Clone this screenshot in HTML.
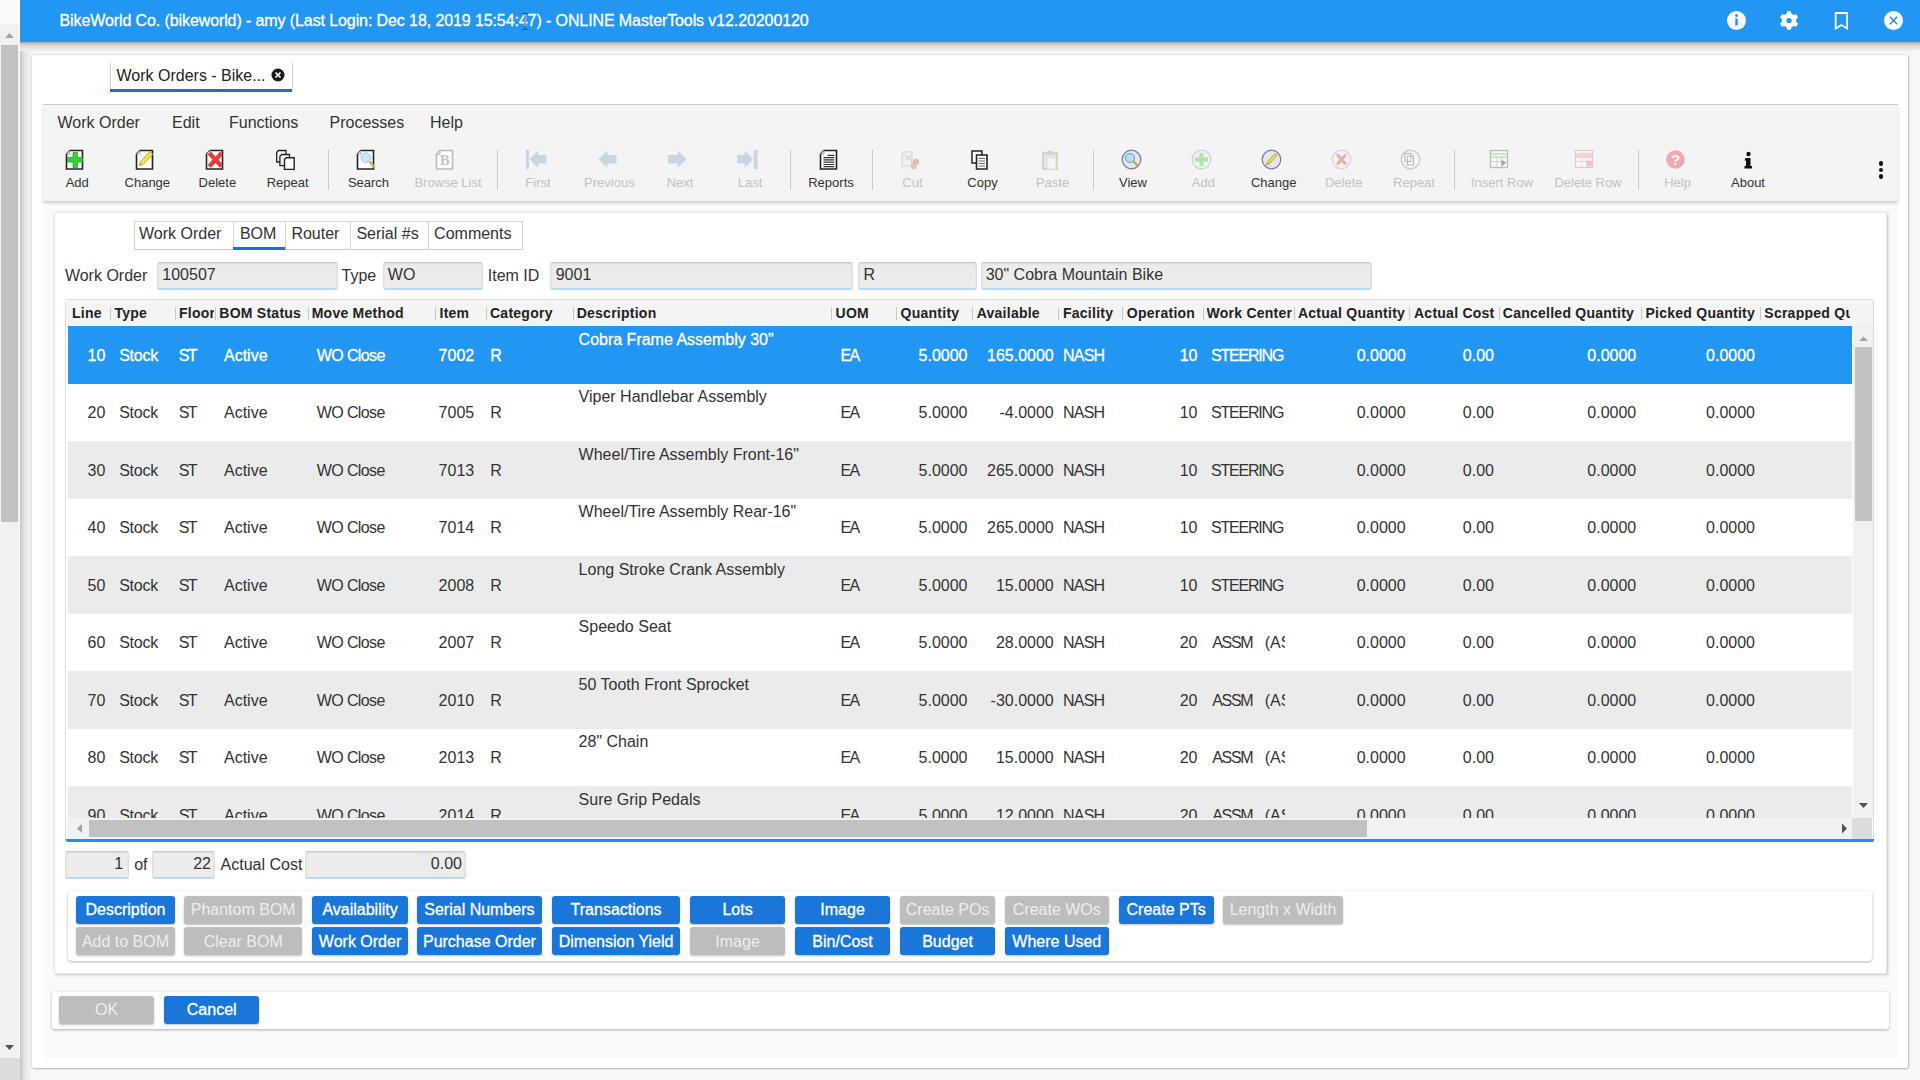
<!DOCTYPE html>
<html><head><meta charset="utf-8"><title>Work Orders</title>
<style>
html,body{margin:0;padding:0;width:1920px;height:1080px;overflow:hidden;background:#f4f4f4;font-family:"Liberation Sans", sans-serif;}
body *{font-family:"Liberation Sans", sans-serif;}
</style></head><body>
<div style="position:absolute;left:0px;top:0px;width:20px;height:1080px;background:#f1f1f1;"></div><div style="position:absolute;left:1px;top:45px;width:17px;height:477px;background:#c1c1c1;"></div><div style="position:absolute;left:0px;top:0px;width:20px;height:24px;background:#f9f9f9;"></div><div style="position:absolute;left:19px;top:0px;width:1px;height:1080px;background:#fbfbfb;"></div><svg style="position:absolute;left:0;top:0" width="20" height="1080"><path d="M5 38 L9.5 33 L14 38 Z" fill="#a3a3a3"/><path d="M5 1045 L14 1045 L9.5 1050 Z" fill="#505050"/></svg><div style="position:absolute;left:0px;top:1058px;width:20px;height:22px;background:#dcdcdc;"></div><div style="position:absolute;left:20px;top:0px;width:1900px;height:1080px;background:#f7f7f7;"></div><div style="position:absolute;left:20px;top:42px;width:12px;height:1038px;background:linear-gradient(to right,#c4c4c4,#e6e6e6 40%,#f6f6f6 100%);"></div><div style="position:absolute;left:20px;top:42px;width:1900px;height:9px;background:linear-gradient(to bottom,#a8a8a8,#d8d8d8 35%,#f2f2f2 100%);"></div><div style="position:absolute;left:20px;top:0px;width:1900px;height:42px;background:#2196f3;z-index:2;"></div><div style="position:absolute;top:12.62px;font-size:16px;line-height:1;color:#fff;font-weight:400;white-space:nowrap;z-index:3;letter-spacing:-0.1px;-webkit-text-stroke:0.3px #fff;left:59.5px;">BikeWorld Co. (bikeworld) - amy (Last Login: Dec 18, 2019 15:54:47) - ONLINE MasterTools v12.20200120</div><svg style="position:absolute;left:520px;top:12px;z-index:4" width="10" height="20"><path d="M2 1.5 h2 M6 1.5 h2 M5 2 v15 M2 17.5 h2 M6 17.5 h2" stroke="#4a4a4a" stroke-width="1" fill="none"/><path d="M4 1.5 h2 M4 17.5 h2" stroke="#4a4a4a" stroke-width="0.9"/></svg><svg style="position:absolute;left:1700px;top:0;z-index:3" width="220" height="42">
<circle cx="36.5" cy="20.5" r="9.5" fill="#fff"/><rect x="35.3" y="18.5" width="2.4" height="7" fill="#2196f3"/><circle cx="36.5" cy="15.5" r="1.4" fill="#2196f3"/>
<g transform="translate(89,20.5)" fill="#fff"><path d="M-1.8 -9.3 h3.6 l0.6 2.6 a7 7 0 0 1 2.2 1.3 l2.6 -0.8 l1.8 3.1 l-2 1.8 a7 7 0 0 1 0 2.6 l2 1.8 l-1.8 3.1 l-2.6 -0.8 a7 7 0 0 1 -2.2 1.3 l-0.6 2.6 h-3.6 l-0.6 -2.6 a7 7 0 0 1 -2.2 -1.3 l-2.6 0.8 l-1.8 -3.1 l2 -1.8 a7 7 0 0 1 0 -2.6 l-2 -1.8 l1.8 -3.1 l2.6 0.8 a7 7 0 0 1 2.2 -1.3 z"/><circle r="2.6" fill="#2196f3"/></g>
<path d="M135.7 13 h11.4 v15.5 l-5.7 -3.5 l-5.7 3.5 z" fill="none" stroke="#fff" stroke-width="1.8"/>
<circle cx="193.5" cy="20.5" r="9.5" fill="#fff"/><path d="M189.8 16.8 l7.4 7.4 M197.2 16.8 l-7.4 7.4" stroke="#2196f3" stroke-width="1.6"/>
</svg><div style="position:absolute;left:32px;top:55px;width:1876px;height:1013px;background:#fff;border-radius:2px;box-shadow:0 0 2px rgba(0,0,0,0.25),1px 1px 2px rgba(0,0,0,0.2);"></div><div style="position:absolute;left:110px;top:63px;width:181px;height:26px;border-left:1px solid #ccc;border-right:1px solid #ccc;box-sizing:content-box;"></div><div style="position:absolute;left:110px;top:89px;width:182px;height:3px;background:#1e6fc8;"></div><div style="position:absolute;top:67.82px;font-size:16px;line-height:1;color:#222;font-weight:400;white-space:nowrap;left:116.5px;">Work Orders - Bike...</div><svg style="position:absolute;left:270px;top:67px" width="16" height="16"><circle cx="8" cy="8" r="6.5" fill="#1a1a1a"/><path d="M5.5 5.5 l5 5 M10.5 5.5 l-5 5" stroke="#fff" stroke-width="1.7"/></svg><div style="position:absolute;left:43px;top:104px;width:1855px;height:954px;background:#fafafa;"></div><div style="position:absolute;left:43px;top:104px;width:1855px;height:96px;background:#f4f4f4;border-top:1px solid #c8c8c8;box-shadow:0 2px 3px rgba(0,0,0,0.18);"></div><div style="position:absolute;top:114.82px;font-size:16px;line-height:1;color:#333;font-weight:400;white-space:nowrap;left:57.5px;">Work Order</div><div style="position:absolute;top:114.82px;font-size:16px;line-height:1;color:#333;font-weight:400;white-space:nowrap;left:172px;">Edit</div><div style="position:absolute;top:114.82px;font-size:16px;line-height:1;color:#333;font-weight:400;white-space:nowrap;left:229px;">Functions</div><div style="position:absolute;top:114.82px;font-size:16px;line-height:1;color:#333;font-weight:400;white-space:nowrap;left:329.5px;">Processes</div><div style="position:absolute;top:114.82px;font-size:16px;line-height:1;color:#333;font-weight:400;white-space:nowrap;left:430px;">Help</div><svg style="position:absolute;left:64.5px;top:149px" width="22" height="22"><path d="M5 1.5 h12.5 v18.5 h-16 v-15 z" fill="#fff" stroke="#222" stroke-width="1.6"/><path d="M1.5 5 h3.5 v-3.5" fill="#e8e8e8" stroke="#999" stroke-width="0.8"/><path d="M8 3.5 h4.5 v5 h5 v4.5 h-5 v5.5 h-4.5 v-5.5 h-5.5 v-4.5 h5.5 z" fill="#33d133" stroke="#1f9a1f" stroke-width="0.7"/></svg><div style="position:absolute;top:176.03px;font-size:13px;line-height:1;color:#333;font-weight:400;white-space:nowrap;left:-222.8px;width:600px;text-align:center;">Add</div><svg style="position:absolute;left:134.5px;top:149px" width="22" height="22"><path d="M5 1.5 h12.5 v18.5 h-16 v-15 z" fill="#fff" stroke="#222" stroke-width="1.6"/><path d="M1.5 5 h3.5 v-3.5" fill="#e8e8e8" stroke="#999" stroke-width="0.8"/><path d="M4.5 16.5 l0.8 -3.8 l9.5 -10 l3 2.6 l-9.5 10 z" fill="#f5e642" stroke="#9c8e1c" stroke-width="0.8"/></svg><div style="position:absolute;top:176.03px;font-size:13px;line-height:1;color:#333;font-weight:400;white-space:nowrap;left:-152.7px;width:600px;text-align:center;">Change</div><svg style="position:absolute;left:204.5px;top:149px" width="22" height="22"><path d="M5 1.5 h12.5 v18.5 h-16 v-15 z" fill="#fff" stroke="#222" stroke-width="1.6"/><path d="M1.5 5 h3.5 v-3.5" fill="#e8e8e8" stroke="#999" stroke-width="0.8"/><path d="M3 5.5 l3 -2.5 l4.5 5 l4.5 -5 l3 2.5 l-4.8 5.2 l4.8 5.2 l-3 2.5 l-4.5 -5 l-4.5 5 l-3 -2.5 l4.8 -5.2 z" fill="#ea3a3a" stroke="#b02020" stroke-width="0.5"/></svg><div style="position:absolute;top:176.03px;font-size:13px;line-height:1;color:#333;font-weight:400;white-space:nowrap;left:-82.6px;width:600px;text-align:center;">Delete</div><svg style="position:absolute;left:274.5px;top:149px" width="22" height="22"><path d="M3.5 1.5 h7.5 v11.5 h-9.3 v-9.7 z" fill="#f6f6f6" stroke="#222" stroke-width="1.3"/><path d="M6.7 5.5 h7.8 v11.2 h-9.6 v-9.4 z" fill="#f2f2f2" stroke="#222" stroke-width="1.3"/><path d="M11.2 8.8 h8 v11.6 h-9.7 v-9.9 z" fill="#fafafa" stroke="#222" stroke-width="1.4"/></svg><div style="position:absolute;top:176.03px;font-size:13px;line-height:1;color:#333;font-weight:400;white-space:nowrap;left:-12.399999999999977px;width:600px;text-align:center;">Repeat</div><svg style="position:absolute;left:356.0px;top:149px" width="22" height="22"><path d="M5 1.5 h12.5 v18.5 h-16 v-15 z" fill="#fff" stroke="#222" stroke-width="1.6"/><path d="M1.5 5 h3.5 v-3.5" fill="#e8e8e8" stroke="#999" stroke-width="0.8"/><circle cx="9.8" cy="8.7" r="4.8" fill="#c4ecfa" stroke="#8cc4dc" stroke-width="0.9"/><path d="M13.5 12.5 l5 5.5" stroke="#d6a84a" stroke-width="2.6"/></svg><div style="position:absolute;top:176.03px;font-size:13px;line-height:1;color:#333;font-weight:400;white-space:nowrap;left:68.5px;width:600px;text-align:center;">Search</div><svg style="position:absolute;left:435.0px;top:149px" width="22" height="22"><path d="M5 1.5 h12.5 v18.5 h-16 v-15 z" fill="#fff" stroke="#bbb" stroke-width="1.6"/><path d="M1.5 5 h3.5 v-3.5" fill="#e8e8e8" stroke="#999" stroke-width="0.8"/><text x="9.8" y="16.2" style="font-family:'Liberation Serif';font-weight:bold;font-size:15px" fill="#c4c4c4" text-anchor="middle">B</text></svg><div style="position:absolute;top:176.03px;font-size:13px;line-height:1;color:#c2c2c2;font-weight:400;white-space:nowrap;left:148px;width:600px;text-align:center;">Browse List</div><svg style="position:absolute;left:526.0px;top:149px" width="22" height="22"><rect x="0" y="1" width="3" height="19" fill="#c8d5e5"/><path d="M3.5 10.2 L12 1.5 V6 H20.5 V14.5 H12 V19 Z" fill="#c8d5e5"/></svg><div style="position:absolute;top:176.03px;font-size:13px;line-height:1;color:#c2c2c2;font-weight:400;white-space:nowrap;left:238px;width:600px;text-align:center;">First</div><svg style="position:absolute;left:596.5px;top:149px" width="22" height="22"><path d="M1.5 10.2 L10.5 1.5 V6 H19.5 V14.5 H10.5 V19 Z" fill="#c8d5e5"/></svg><div style="position:absolute;top:176.03px;font-size:13px;line-height:1;color:#c2c2c2;font-weight:400;white-space:nowrap;left:309.4px;width:600px;text-align:center;">Previous</div><svg style="position:absolute;left:666.5px;top:149px" width="22" height="22"><path d="M19.7 10.2 L10.7 1.5 V6 H1 V14.5 H10.7 V19 Z" fill="#c8d5e5"/></svg><div style="position:absolute;top:176.03px;font-size:13px;line-height:1;color:#c2c2c2;font-weight:400;white-space:nowrap;left:380px;width:600px;text-align:center;">Next</div><svg style="position:absolute;left:736.5px;top:149px" width="22" height="22"><rect x="16.8" y="1" width="3.7" height="19" fill="#c8d5e5"/><path d="M16.2 10.2 L7.7 1.5 V6 H0.3 V14.5 H7.7 V19 Z" fill="#c8d5e5"/></svg><div style="position:absolute;top:176.03px;font-size:13px;line-height:1;color:#c2c2c2;font-weight:400;white-space:nowrap;left:450px;width:600px;text-align:center;">Last</div><svg style="position:absolute;left:818.5px;top:149px" width="22" height="22"><path d="M5 1.5 h12.5 v18.5 h-16 v-15 z" fill="#fff" stroke="#222" stroke-width="1.6"/><path d="M1.5 5 h3.5 v-3.5" fill="#e8e8e8" stroke="#999" stroke-width="0.8"/><path d="M8.5 6.3 h6.8 M4.5 8.6 h10.8 M4.5 10.9 h10.8 M4.5 13.2 h10.8 M4.5 15.5 h10.8 M4.5 17.6 h10.8" stroke="#333" stroke-width="1.2"/></svg><div style="position:absolute;top:176.03px;font-size:13px;line-height:1;color:#333;font-weight:400;white-space:nowrap;left:531px;width:600px;text-align:center;">Reports</div><svg style="position:absolute;left:899.5px;top:149px" width="22" height="22"><g opacity="0.55"><path d="M4 3 h8 v14 h-10 v-12 z" fill="#f0f0f0" stroke="#bbb" stroke-width="1.2"/><path d="M5 6 l7 6 M6 11 l5 -5" stroke="#bbb" stroke-width="1.1"/><circle cx="16" cy="13" r="3.2" fill="#c9997a"/><circle cx="13.5" cy="17.5" r="3" fill="#c9a58a"/></g></svg><div style="position:absolute;top:176.03px;font-size:13px;line-height:1;color:#c2c2c2;font-weight:400;white-space:nowrap;left:612.4px;width:600px;text-align:center;">Cut</div><svg style="position:absolute;left:969.5px;top:149px" width="22" height="22"><path d="M2 2 h10 v12 h-10 z" fill="#fff" stroke="#222" stroke-width="1.5"/><path d="M6.5 6 h10.5 v14 h-10.5 z" fill="#fff" stroke="#222" stroke-width="1.6"/><path d="M8.5 9.5 h6.5 M8.5 12 h6.5 M8.5 14.5 h6.5 M8.5 17 h6.5" stroke="#555" stroke-width="0.9"/></svg><div style="position:absolute;top:176.03px;font-size:13px;line-height:1;color:#333;font-weight:400;white-space:nowrap;left:682.5px;width:600px;text-align:center;">Copy</div><svg style="position:absolute;left:1039.5px;top:149px" width="22" height="22"><path d="M3 4 h14 v16 h-14 z" fill="#e9e4dc" stroke="#cfc8bc" stroke-width="1.4"/><path d="M7 2 h6 v4 h-6 z" fill="#d9d2c6"/><path d="M7 9 h9 v11 h-9 z" fill="#f6f6f6" stroke="#ddd" stroke-width="1"/></svg><div style="position:absolute;top:176.03px;font-size:13px;line-height:1;color:#c2c2c2;font-weight:400;white-space:nowrap;left:752.5px;width:600px;text-align:center;">Paste</div><svg style="position:absolute;left:1120.5px;top:149px" width="22" height="22"><circle cx="10.5" cy="10.5" r="9.3" fill="#e4e6f0" stroke="#7a7fa8" stroke-width="1.3"/><circle cx="9" cy="9" r="4.5" fill="#b8e0f8" stroke="#5e9cc8" stroke-width="1"/><path d="M12 12 l5 5" stroke="#d8a040" stroke-width="2.4"/></svg><div style="position:absolute;top:176.03px;font-size:13px;line-height:1;color:#333;font-weight:400;white-space:nowrap;left:833px;width:600px;text-align:center;">View</div><svg style="position:absolute;left:1190.5px;top:149px" width="22" height="22"><g opacity="0.4"><circle cx="10.5" cy="10.5" r="9.3" fill="#eceef4" stroke="#9a9fc0" stroke-width="1.3"/><path d="M8.5 4 h4 v4.5 h4.5 v4 h-4.5 v4.5 h-4 v-4.5 h-4.5 v-4 h4.5 z" fill="#3ad03a"/></g></svg><div style="position:absolute;top:176.03px;font-size:13px;line-height:1;color:#c2c2c2;font-weight:400;white-space:nowrap;left:903.4000000000001px;width:600px;text-align:center;">Add</div><svg style="position:absolute;left:1260.5px;top:149px" width="22" height="22"><circle cx="10.5" cy="10.5" r="9.3" fill="#e4e6f0" stroke="#7a7fa8" stroke-width="1.3"/><path d="M5.5 16 l1 -3.2 l7.5 -8 l2 1.8 l-7.5 8 z" fill="#f0e050" stroke="#a09020" stroke-width="0.8"/></svg><div style="position:absolute;top:176.03px;font-size:13px;line-height:1;color:#333;font-weight:400;white-space:nowrap;left:973.7px;width:600px;text-align:center;">Change</div><svg style="position:absolute;left:1330.5px;top:149px" width="22" height="22"><g opacity="0.35"><circle cx="10.5" cy="10.5" r="9.3" fill="#eceef4" stroke="#9a9fc0" stroke-width="1.3"/><path d="M5 6.5 l2 -2 l3.5 3.5 l3.5 -3.5 l2 2 l-3.5 4 l3.5 4 l-2 2 l-3.5 -3.5 l-3.5 3.5 l-2 -2 l3.5 -4 z" fill="#e03030"/></g></svg><div style="position:absolute;top:176.03px;font-size:13px;line-height:1;color:#c2c2c2;font-weight:400;white-space:nowrap;left:1043.7px;width:600px;text-align:center;">Delete</div><svg style="position:absolute;left:1400.1px;top:149px" width="22" height="22"><g opacity="0.4"><circle cx="10.5" cy="10.5" r="9.3" fill="#f4f4f4" stroke="#888" stroke-width="1.3"/><path d="M5 4.5 h6 v8 h-6 z M7.5 7 h6 v9 h-6 z" fill="#fff" stroke="#666" stroke-width="1.1"/></g></svg><div style="position:absolute;top:176.03px;font-size:13px;line-height:1;color:#c2c2c2;font-weight:400;white-space:nowrap;left:1114px;width:600px;text-align:center;">Repeat</div><svg style="position:absolute;left:1489.2px;top:149px" width="22" height="22"><g opacity="0.45"><rect x="1.5" y="1.5" width="17" height="17" fill="#fff" stroke="#777" stroke-width="1.3"/><rect x="2" y="4.5" width="16" height="4" fill="#bff0b8"/><path d="M1.5 4.5 h17 M1.5 8.5 h17 M1.5 12.5 h17 M8 8.5 v10 M13 8.5 v10" stroke="#999" stroke-width="0.8"/><path d="M12.5 10.5 l4.5 3.5 l-4.5 3.5 z" fill="#444"/></g></svg><div style="position:absolute;top:176.03px;font-size:13px;line-height:1;color:#c2c2c2;font-weight:400;white-space:nowrap;left:1202px;width:600px;text-align:center;">Insert Row</div><svg style="position:absolute;left:1574.2px;top:149px" width="22" height="22"><g opacity="0.4"><rect x="1.5" y="1.5" width="17" height="17" fill="#fff" stroke="#e08080" stroke-width="1.1"/><rect x="2" y="4.5" width="16" height="4" fill="#f4a0a0"/><path d="M1.5 4.5 h17 M1.5 8.5 h17 M1.5 12.5 h17 M8 8.5 v10 M13 8.5 v10" stroke="#e0a0a0" stroke-width="0.8"/><rect x="12" y="11.5" width="6" height="6" fill="#f08080"/></g></svg><div style="position:absolute;top:176.03px;font-size:13px;line-height:1;color:#c2c2c2;font-weight:400;white-space:nowrap;left:1288px;width:600px;text-align:center;">Delete Row</div><svg style="position:absolute;left:1664.5px;top:149px" width="22" height="22"><g opacity="0.38"><circle cx="10.5" cy="10.5" r="9.3" fill="#e8333a"/><text x="10.5" y="16" font-family="Liberation Sans" font-weight="bold" font-size="15" fill="#fff" text-anchor="middle">?</text></g></svg><div style="position:absolute;top:176.03px;font-size:13px;line-height:1;color:#c2c2c2;font-weight:400;white-space:nowrap;left:1377.6px;width:600px;text-align:center;">Help</div><svg style="position:absolute;left:1737.0px;top:149px" width="22" height="22"><path d="M8.5 9 h5 v8 h1.5 v2.5 h-7.5 v-2.5 h1.5 v-5.5 h-1.5 z" fill="#111"/><circle cx="11.5" cy="5" r="2.2" fill="#111"/></svg><div style="position:absolute;top:176.03px;font-size:13px;line-height:1;color:#333;font-weight:400;white-space:nowrap;left:1448px;width:600px;text-align:center;">About</div><div style="position:absolute;left:328px;top:150px;width:1px;height:40px;background:#c9c9c9;"></div><div style="position:absolute;left:497px;top:150px;width:1px;height:40px;background:#c9c9c9;"></div><div style="position:absolute;left:790px;top:150px;width:1px;height:40px;background:#c9c9c9;"></div><div style="position:absolute;left:872px;top:150px;width:1px;height:40px;background:#c9c9c9;"></div><div style="position:absolute;left:1093px;top:150px;width:1px;height:40px;background:#c9c9c9;"></div><div style="position:absolute;left:1454px;top:150px;width:1px;height:40px;background:#c9c9c9;"></div><div style="position:absolute;left:1638px;top:150px;width:1px;height:40px;background:#c9c9c9;"></div><div style="position:absolute;left:1878.6px;top:161.3px;width:4.4px;height:4.4px;border-radius:50%;background:#111"></div><div style="position:absolute;left:1878.6px;top:167.8px;width:4.4px;height:4.4px;border-radius:50%;background:#111"></div><div style="position:absolute;left:1878.6px;top:174.3px;width:4.4px;height:4.4px;border-radius:50%;background:#111"></div><div style="position:absolute;left:54px;top:212px;width:1833px;height:762px;background:#fff;border:1px solid #e6e6e6;box-sizing:border-box;border-radius:2px;box-shadow:1px 1px 3px rgba(0,0,0,0.22);"></div><div style="position:absolute;left:133.5px;top:220.5px;width:389px;height:29px;border:1px solid #cfcfcf;border-top-color:#d8d8d8;box-sizing:border-box;"></div><div style="position:absolute;left:233px;top:221px;width:1px;height:28px;background:#d4d4d4;"></div><div style="position:absolute;left:285px;top:221px;width:1px;height:28px;background:#d4d4d4;"></div><div style="position:absolute;left:350px;top:221px;width:1px;height:28px;background:#d4d4d4;"></div><div style="position:absolute;left:428px;top:221px;width:1px;height:28px;background:#d4d4d4;"></div><div style="position:absolute;left:233px;top:247px;width:52px;height:3px;background:#1e6fc8;"></div><div style="position:absolute;top:225.82px;font-size:16px;line-height:1;color:#333;font-weight:400;white-space:nowrap;left:139px;">Work Order</div><div style="position:absolute;top:225.82px;font-size:16px;line-height:1;color:#333;font-weight:400;white-space:nowrap;left:239.9px;">BOM</div><div style="position:absolute;top:225.82px;font-size:16px;line-height:1;color:#333;font-weight:400;white-space:nowrap;left:291.4px;">Router</div><div style="position:absolute;top:225.82px;font-size:16px;line-height:1;color:#333;font-weight:400;white-space:nowrap;left:356.4px;">Serial #s</div><div style="position:absolute;top:225.82px;font-size:16px;line-height:1;color:#333;font-weight:400;white-space:nowrap;left:434.1px;">Comments</div><div style="position:absolute;top:268.02px;font-size:16px;line-height:1;color:#333;font-weight:400;white-space:nowrap;left:64.9px;">Work Order</div><div style="position:absolute;top:268.02px;font-size:16px;line-height:1;color:#333;font-weight:400;white-space:nowrap;left:341.5px;">Type</div><div style="position:absolute;top:268.02px;font-size:16px;line-height:1;color:#333;font-weight:400;white-space:nowrap;left:487.8px;">Item ID</div><div style="position:absolute;left:157px;top:262px;width:180.5px;height:28px;background:#ececec;border:1px solid #dcdcdc;border-top-color:#c6c6c6;border-bottom:2px solid #b8daf6;box-sizing:border-box;border-radius:3px;box-shadow:inset 0 1px 2px rgba(0,0,0,0.08);"></div><div style="position:absolute;top:267.02px;font-size:16px;line-height:1;color:#333;font-weight:400;white-space:nowrap;left:162.3px;">100507</div><div style="position:absolute;left:383px;top:262px;width:100.39999999999998px;height:28px;background:#ececec;border:1px solid #dcdcdc;border-top-color:#c6c6c6;border-bottom:2px solid #b8daf6;box-sizing:border-box;border-radius:3px;box-shadow:inset 0 1px 2px rgba(0,0,0,0.08);"></div><div style="position:absolute;top:267.02px;font-size:16px;line-height:1;color:#333;font-weight:400;white-space:nowrap;left:387.8px;">WO</div><div style="position:absolute;left:549.9px;top:262px;width:303.6px;height:28px;background:#ececec;border:1px solid #dcdcdc;border-top-color:#c6c6c6;border-bottom:2px solid #b8daf6;box-sizing:border-box;border-radius:3px;box-shadow:inset 0 1px 2px rgba(0,0,0,0.08);"></div><div style="position:absolute;top:267.02px;font-size:16px;line-height:1;color:#333;font-weight:400;white-space:nowrap;left:555.7px;">9001</div><div style="position:absolute;left:858px;top:262px;width:118.70000000000005px;height:28px;background:#ececec;border:1px solid #dcdcdc;border-top-color:#c6c6c6;border-bottom:2px solid #b8daf6;box-sizing:border-box;border-radius:3px;box-shadow:inset 0 1px 2px rgba(0,0,0,0.08);"></div><div style="position:absolute;top:267.02px;font-size:16px;line-height:1;color:#333;font-weight:400;white-space:nowrap;left:863.4px;">R</div><div style="position:absolute;left:981px;top:262px;width:391.20000000000005px;height:28px;background:#ececec;border:1px solid #dcdcdc;border-top-color:#c6c6c6;border-bottom:2px solid #b8daf6;box-sizing:border-box;border-radius:3px;box-shadow:inset 0 1px 2px rgba(0,0,0,0.08);"></div><div style="position:absolute;top:267.02px;font-size:16px;line-height:1;color:#333;font-weight:400;white-space:nowrap;left:985.7px;">30" Cobra Mountain Bike</div><div style="position:absolute;left:65px;top:299px;width:1809px;height:543px;border:1px solid #dcdcdc;border-bottom:none;box-sizing:border-box;background:#fff;border-radius:3px 3px 0 0;"></div><div style="position:absolute;left:66px;top:300px;width:1807px;height:26.2px;background:#f4f4f4;border-radius:2px 2px 0 0;"></div><div style="position:absolute;top:305.93px;font-size:14px;line-height:1;color:#222;font-weight:700;white-space:nowrap;letter-spacing:0.25px;left:72px;">Line</div><div style="position:absolute;top:305.93px;font-size:14px;line-height:1;color:#222;font-weight:700;white-space:nowrap;letter-spacing:0.25px;left:114.5px;">Type</div><div style="position:absolute;top:305.93px;font-size:14px;line-height:1;color:#222;font-weight:700;white-space:nowrap;letter-spacing:0.25px;left:179px;width:35px;overflow:hidden;">Floor</div><div style="position:absolute;top:305.93px;font-size:14px;line-height:1;color:#222;font-weight:700;white-space:nowrap;letter-spacing:0.25px;left:219.3px;">BOM Status</div><div style="position:absolute;top:305.93px;font-size:14px;line-height:1;color:#222;font-weight:700;white-space:nowrap;letter-spacing:0.25px;left:311.7px;">Move Method</div><div style="position:absolute;top:305.93px;font-size:14px;line-height:1;color:#222;font-weight:700;white-space:nowrap;letter-spacing:0.25px;left:439.5px;">Item</div><div style="position:absolute;top:305.93px;font-size:14px;line-height:1;color:#222;font-weight:700;white-space:nowrap;letter-spacing:0.25px;left:490px;">Category</div><div style="position:absolute;top:305.93px;font-size:14px;line-height:1;color:#222;font-weight:700;white-space:nowrap;letter-spacing:0.25px;left:576.7px;">Description</div><div style="position:absolute;top:305.93px;font-size:14px;line-height:1;color:#222;font-weight:700;white-space:nowrap;letter-spacing:0.25px;left:835.6px;">UOM</div><div style="position:absolute;top:305.93px;font-size:14px;line-height:1;color:#222;font-weight:700;white-space:nowrap;letter-spacing:0.25px;left:900.6px;">Quantity</div><div style="position:absolute;top:305.93px;font-size:14px;line-height:1;color:#222;font-weight:700;white-space:nowrap;letter-spacing:0.25px;left:976.7px;">Available</div><div style="position:absolute;top:305.93px;font-size:14px;line-height:1;color:#222;font-weight:700;white-space:nowrap;letter-spacing:0.25px;left:1063px;">Facility</div><div style="position:absolute;top:305.93px;font-size:14px;line-height:1;color:#222;font-weight:700;white-space:nowrap;letter-spacing:0.25px;left:1126.8px;">Operation</div><div style="position:absolute;top:305.93px;font-size:14px;line-height:1;color:#222;font-weight:700;white-space:nowrap;letter-spacing:0.25px;left:1206.5px;width:87px;overflow:hidden;">Work Center</div><div style="position:absolute;top:305.93px;font-size:14px;line-height:1;color:#222;font-weight:700;white-space:nowrap;letter-spacing:0.25px;left:1297.9px;">Actual Quantity</div><div style="position:absolute;top:305.93px;font-size:14px;line-height:1;color:#222;font-weight:700;white-space:nowrap;letter-spacing:0.25px;left:1414px;">Actual Cost</div><div style="position:absolute;top:305.93px;font-size:14px;line-height:1;color:#222;font-weight:700;white-space:nowrap;letter-spacing:0.25px;left:1502.8px;">Cancelled Quantity</div><div style="position:absolute;top:305.93px;font-size:14px;line-height:1;color:#222;font-weight:700;white-space:nowrap;letter-spacing:0.25px;left:1645.5px;">Picked Quantity</div><div style="position:absolute;top:305.93px;font-size:14px;line-height:1;color:#222;font-weight:700;white-space:nowrap;letter-spacing:0.25px;left:1764.3px;width:86px;overflow:hidden;">Scrapped Qu</div><div style="position:absolute;left:110px;top:307px;width:1px;height:13px;background:#c8c8c8;"></div><div style="position:absolute;left:175px;top:307px;width:1px;height:13px;background:#c8c8c8;"></div><div style="position:absolute;left:215px;top:307px;width:1px;height:13px;background:#c8c8c8;"></div><div style="position:absolute;left:308px;top:307px;width:1px;height:13px;background:#c8c8c8;"></div><div style="position:absolute;left:435px;top:307px;width:1px;height:13px;background:#c8c8c8;"></div><div style="position:absolute;left:486px;top:307px;width:1px;height:13px;background:#c8c8c8;"></div><div style="position:absolute;left:573px;top:307px;width:1px;height:13px;background:#c8c8c8;"></div><div style="position:absolute;left:831px;top:307px;width:1px;height:13px;background:#c8c8c8;"></div><div style="position:absolute;left:896px;top:307px;width:1px;height:13px;background:#c8c8c8;"></div><div style="position:absolute;left:972px;top:307px;width:1px;height:13px;background:#c8c8c8;"></div><div style="position:absolute;left:1058px;top:307px;width:1px;height:13px;background:#c8c8c8;"></div><div style="position:absolute;left:1122px;top:307px;width:1px;height:13px;background:#c8c8c8;"></div><div style="position:absolute;left:1203px;top:307px;width:1px;height:13px;background:#c8c8c8;"></div><div style="position:absolute;left:1294px;top:307px;width:1px;height:13px;background:#c8c8c8;"></div><div style="position:absolute;left:1409px;top:307px;width:1px;height:13px;background:#c8c8c8;"></div><div style="position:absolute;left:1499px;top:307px;width:1px;height:13px;background:#c8c8c8;"></div><div style="position:absolute;left:1641px;top:307px;width:1px;height:13px;background:#c8c8c8;"></div><div style="position:absolute;left:1760px;top:307px;width:1px;height:13px;background:#c8c8c8;"></div><div style="position:absolute;left:68px;top:326.2px;width:1784px;height:491.8px;overflow:hidden"><div style="position:absolute;left:0;top:0.0px;width:1784px;height:57.5px;background:#2196f3"></div><div style="position:absolute;top:21.42px;font-size:16px;line-height:1;color:#fff;font-weight:400;white-space:nowrap;-webkit-text-stroke:0.3px #fff;left:-362.6px;width:400px;text-align:right;">10</div><div style="position:absolute;top:21.42px;font-size:16px;line-height:1;color:#fff;font-weight:400;white-space:nowrap;letter-spacing:-0.25px;-webkit-text-stroke:0.3px #fff;left:51.2px;">Stock</div><div style="position:absolute;top:21.42px;font-size:16px;line-height:1;color:#fff;font-weight:400;white-space:nowrap;letter-spacing:-1.6px;-webkit-text-stroke:0.3px #fff;left:110.69999999999999px;">ST</div><div style="position:absolute;top:21.42px;font-size:16px;line-height:1;color:#fff;font-weight:400;white-space:nowrap;-webkit-text-stroke:0.3px #fff;left:156px;">Active</div><div style="position:absolute;top:21.42px;font-size:16px;line-height:1;color:#fff;font-weight:400;white-space:nowrap;letter-spacing:-0.6px;-webkit-text-stroke:0.3px #fff;left:248.7px;">WO Close</div><div style="position:absolute;top:21.42px;font-size:16px;line-height:1;color:#fff;font-weight:400;white-space:nowrap;-webkit-text-stroke:0.3px #fff;left:370.6px;">7002</div><div style="position:absolute;top:21.42px;font-size:16px;line-height:1;color:#fff;font-weight:400;white-space:nowrap;-webkit-text-stroke:0.3px #fff;left:422.2px;">R</div><div style="position:absolute;top:5.42px;font-size:16px;line-height:1;color:#fff;font-weight:400;white-space:nowrap;-webkit-text-stroke:0.3px #fff;left:510.6px;">Cobra Frame Assembly 30"</div><div style="position:absolute;top:21.42px;font-size:16px;line-height:1;color:#fff;font-weight:400;white-space:nowrap;letter-spacing:-1.7px;-webkit-text-stroke:0.3px #fff;left:772.5px;">EA</div><div style="position:absolute;top:21.42px;font-size:16px;line-height:1;color:#fff;font-weight:400;white-space:nowrap;-webkit-text-stroke:0.3px #fff;left:499.5px;width:400px;text-align:right;">5.0000</div><div style="position:absolute;top:21.42px;font-size:16px;line-height:1;color:#fff;font-weight:400;white-space:nowrap;-webkit-text-stroke:0.3px #fff;left:585.75px;width:400px;text-align:right;">165.0000</div><div style="position:absolute;top:21.42px;font-size:16px;line-height:1;color:#fff;font-weight:400;white-space:nowrap;letter-spacing:-0.8px;-webkit-text-stroke:0.3px #fff;left:995px;">NASH</div><div style="position:absolute;top:21.42px;font-size:16px;line-height:1;color:#fff;font-weight:400;white-space:nowrap;-webkit-text-stroke:0.3px #fff;left:729.5px;width:400px;text-align:right;">10</div><div style="position:absolute;top:21.42px;font-size:16px;line-height:1;color:#fff;font-weight:400;white-space:nowrap;letter-spacing:-1.2px;-webkit-text-stroke:0.3px #fff;left:1143px;">STEERING</div><div style="position:absolute;top:21.42px;font-size:16px;line-height:1;color:#fff;font-weight:400;white-space:nowrap;-webkit-text-stroke:0.3px #fff;left:937.5999999999999px;width:400px;text-align:right;">0.0000</div><div style="position:absolute;top:21.42px;font-size:16px;line-height:1;color:#fff;font-weight:400;white-space:nowrap;-webkit-text-stroke:0.3px #fff;left:1026px;width:400px;text-align:right;">0.00</div><div style="position:absolute;top:21.42px;font-size:16px;line-height:1;color:#fff;font-weight:400;white-space:nowrap;-webkit-text-stroke:0.3px #fff;left:1168.25px;width:400px;text-align:right;">0.0000</div><div style="position:absolute;top:21.42px;font-size:16px;line-height:1;color:#fff;font-weight:400;white-space:nowrap;-webkit-text-stroke:0.3px #fff;left:1287px;width:400px;text-align:right;">0.0000</div><div style="position:absolute;left:0;top:57.5px;width:1784px;height:57.5px;background:#fff"></div><div style="position:absolute;top:78.92px;font-size:16px;line-height:1;color:#333;font-weight:400;white-space:nowrap;left:-362.6px;width:400px;text-align:right;">20</div><div style="position:absolute;top:78.92px;font-size:16px;line-height:1;color:#333;font-weight:400;white-space:nowrap;letter-spacing:-0.25px;left:51.2px;">Stock</div><div style="position:absolute;top:78.92px;font-size:16px;line-height:1;color:#333;font-weight:400;white-space:nowrap;letter-spacing:-1.6px;left:110.69999999999999px;">ST</div><div style="position:absolute;top:78.92px;font-size:16px;line-height:1;color:#333;font-weight:400;white-space:nowrap;left:156px;">Active</div><div style="position:absolute;top:78.92px;font-size:16px;line-height:1;color:#333;font-weight:400;white-space:nowrap;letter-spacing:-0.6px;left:248.7px;">WO Close</div><div style="position:absolute;top:78.92px;font-size:16px;line-height:1;color:#333;font-weight:400;white-space:nowrap;left:370.6px;">7005</div><div style="position:absolute;top:78.92px;font-size:16px;line-height:1;color:#333;font-weight:400;white-space:nowrap;left:422.2px;">R</div><div style="position:absolute;top:62.92px;font-size:16px;line-height:1;color:#333;font-weight:400;white-space:nowrap;left:510.6px;">Viper Handlebar Assembly</div><div style="position:absolute;top:78.92px;font-size:16px;line-height:1;color:#333;font-weight:400;white-space:nowrap;letter-spacing:-1.7px;left:772.5px;">EA</div><div style="position:absolute;top:78.92px;font-size:16px;line-height:1;color:#333;font-weight:400;white-space:nowrap;left:499.5px;width:400px;text-align:right;">5.0000</div><div style="position:absolute;top:78.92px;font-size:16px;line-height:1;color:#333;font-weight:400;white-space:nowrap;left:585.75px;width:400px;text-align:right;">-4.0000</div><div style="position:absolute;top:78.92px;font-size:16px;line-height:1;color:#333;font-weight:400;white-space:nowrap;letter-spacing:-0.8px;left:995px;">NASH</div><div style="position:absolute;top:78.92px;font-size:16px;line-height:1;color:#333;font-weight:400;white-space:nowrap;left:729.5px;width:400px;text-align:right;">10</div><div style="position:absolute;top:78.92px;font-size:16px;line-height:1;color:#333;font-weight:400;white-space:nowrap;letter-spacing:-1.2px;left:1143px;">STEERING</div><div style="position:absolute;top:78.92px;font-size:16px;line-height:1;color:#333;font-weight:400;white-space:nowrap;left:937.5999999999999px;width:400px;text-align:right;">0.0000</div><div style="position:absolute;top:78.92px;font-size:16px;line-height:1;color:#333;font-weight:400;white-space:nowrap;left:1026px;width:400px;text-align:right;">0.00</div><div style="position:absolute;top:78.92px;font-size:16px;line-height:1;color:#333;font-weight:400;white-space:nowrap;left:1168.25px;width:400px;text-align:right;">0.0000</div><div style="position:absolute;top:78.92px;font-size:16px;line-height:1;color:#333;font-weight:400;white-space:nowrap;left:1287px;width:400px;text-align:right;">0.0000</div><div style="position:absolute;left:0;top:115.0px;width:1784px;height:57.5px;background:#ebebeb"></div><div style="position:absolute;top:136.42px;font-size:16px;line-height:1;color:#333;font-weight:400;white-space:nowrap;left:-362.6px;width:400px;text-align:right;">30</div><div style="position:absolute;top:136.42px;font-size:16px;line-height:1;color:#333;font-weight:400;white-space:nowrap;letter-spacing:-0.25px;left:51.2px;">Stock</div><div style="position:absolute;top:136.42px;font-size:16px;line-height:1;color:#333;font-weight:400;white-space:nowrap;letter-spacing:-1.6px;left:110.69999999999999px;">ST</div><div style="position:absolute;top:136.42px;font-size:16px;line-height:1;color:#333;font-weight:400;white-space:nowrap;left:156px;">Active</div><div style="position:absolute;top:136.42px;font-size:16px;line-height:1;color:#333;font-weight:400;white-space:nowrap;letter-spacing:-0.6px;left:248.7px;">WO Close</div><div style="position:absolute;top:136.42px;font-size:16px;line-height:1;color:#333;font-weight:400;white-space:nowrap;left:370.6px;">7013</div><div style="position:absolute;top:136.42px;font-size:16px;line-height:1;color:#333;font-weight:400;white-space:nowrap;left:422.2px;">R</div><div style="position:absolute;top:120.42px;font-size:16px;line-height:1;color:#333;font-weight:400;white-space:nowrap;left:510.6px;">Wheel/Tire Assembly Front-16"</div><div style="position:absolute;top:136.42px;font-size:16px;line-height:1;color:#333;font-weight:400;white-space:nowrap;letter-spacing:-1.7px;left:772.5px;">EA</div><div style="position:absolute;top:136.42px;font-size:16px;line-height:1;color:#333;font-weight:400;white-space:nowrap;left:499.5px;width:400px;text-align:right;">5.0000</div><div style="position:absolute;top:136.42px;font-size:16px;line-height:1;color:#333;font-weight:400;white-space:nowrap;left:585.75px;width:400px;text-align:right;">265.0000</div><div style="position:absolute;top:136.42px;font-size:16px;line-height:1;color:#333;font-weight:400;white-space:nowrap;letter-spacing:-0.8px;left:995px;">NASH</div><div style="position:absolute;top:136.42px;font-size:16px;line-height:1;color:#333;font-weight:400;white-space:nowrap;left:729.5px;width:400px;text-align:right;">10</div><div style="position:absolute;top:136.42px;font-size:16px;line-height:1;color:#333;font-weight:400;white-space:nowrap;letter-spacing:-1.2px;left:1143px;">STEERING</div><div style="position:absolute;top:136.42px;font-size:16px;line-height:1;color:#333;font-weight:400;white-space:nowrap;left:937.5999999999999px;width:400px;text-align:right;">0.0000</div><div style="position:absolute;top:136.42px;font-size:16px;line-height:1;color:#333;font-weight:400;white-space:nowrap;left:1026px;width:400px;text-align:right;">0.00</div><div style="position:absolute;top:136.42px;font-size:16px;line-height:1;color:#333;font-weight:400;white-space:nowrap;left:1168.25px;width:400px;text-align:right;">0.0000</div><div style="position:absolute;top:136.42px;font-size:16px;line-height:1;color:#333;font-weight:400;white-space:nowrap;left:1287px;width:400px;text-align:right;">0.0000</div><div style="position:absolute;left:0;top:172.5px;width:1784px;height:57.5px;background:#fff"></div><div style="position:absolute;top:193.92px;font-size:16px;line-height:1;color:#333;font-weight:400;white-space:nowrap;left:-362.6px;width:400px;text-align:right;">40</div><div style="position:absolute;top:193.92px;font-size:16px;line-height:1;color:#333;font-weight:400;white-space:nowrap;letter-spacing:-0.25px;left:51.2px;">Stock</div><div style="position:absolute;top:193.92px;font-size:16px;line-height:1;color:#333;font-weight:400;white-space:nowrap;letter-spacing:-1.6px;left:110.69999999999999px;">ST</div><div style="position:absolute;top:193.92px;font-size:16px;line-height:1;color:#333;font-weight:400;white-space:nowrap;left:156px;">Active</div><div style="position:absolute;top:193.92px;font-size:16px;line-height:1;color:#333;font-weight:400;white-space:nowrap;letter-spacing:-0.6px;left:248.7px;">WO Close</div><div style="position:absolute;top:193.92px;font-size:16px;line-height:1;color:#333;font-weight:400;white-space:nowrap;left:370.6px;">7014</div><div style="position:absolute;top:193.92px;font-size:16px;line-height:1;color:#333;font-weight:400;white-space:nowrap;left:422.2px;">R</div><div style="position:absolute;top:177.92px;font-size:16px;line-height:1;color:#333;font-weight:400;white-space:nowrap;left:510.6px;">Wheel/Tire Assembly Rear-16"</div><div style="position:absolute;top:193.92px;font-size:16px;line-height:1;color:#333;font-weight:400;white-space:nowrap;letter-spacing:-1.7px;left:772.5px;">EA</div><div style="position:absolute;top:193.92px;font-size:16px;line-height:1;color:#333;font-weight:400;white-space:nowrap;left:499.5px;width:400px;text-align:right;">5.0000</div><div style="position:absolute;top:193.92px;font-size:16px;line-height:1;color:#333;font-weight:400;white-space:nowrap;left:585.75px;width:400px;text-align:right;">265.0000</div><div style="position:absolute;top:193.92px;font-size:16px;line-height:1;color:#333;font-weight:400;white-space:nowrap;letter-spacing:-0.8px;left:995px;">NASH</div><div style="position:absolute;top:193.92px;font-size:16px;line-height:1;color:#333;font-weight:400;white-space:nowrap;left:729.5px;width:400px;text-align:right;">10</div><div style="position:absolute;top:193.92px;font-size:16px;line-height:1;color:#333;font-weight:400;white-space:nowrap;letter-spacing:-1.2px;left:1143px;">STEERING</div><div style="position:absolute;top:193.92px;font-size:16px;line-height:1;color:#333;font-weight:400;white-space:nowrap;left:937.5999999999999px;width:400px;text-align:right;">0.0000</div><div style="position:absolute;top:193.92px;font-size:16px;line-height:1;color:#333;font-weight:400;white-space:nowrap;left:1026px;width:400px;text-align:right;">0.00</div><div style="position:absolute;top:193.92px;font-size:16px;line-height:1;color:#333;font-weight:400;white-space:nowrap;left:1168.25px;width:400px;text-align:right;">0.0000</div><div style="position:absolute;top:193.92px;font-size:16px;line-height:1;color:#333;font-weight:400;white-space:nowrap;left:1287px;width:400px;text-align:right;">0.0000</div><div style="position:absolute;left:0;top:230.0px;width:1784px;height:57.5px;background:#ebebeb"></div><div style="position:absolute;top:251.42px;font-size:16px;line-height:1;color:#333;font-weight:400;white-space:nowrap;left:-362.6px;width:400px;text-align:right;">50</div><div style="position:absolute;top:251.42px;font-size:16px;line-height:1;color:#333;font-weight:400;white-space:nowrap;letter-spacing:-0.25px;left:51.2px;">Stock</div><div style="position:absolute;top:251.42px;font-size:16px;line-height:1;color:#333;font-weight:400;white-space:nowrap;letter-spacing:-1.6px;left:110.69999999999999px;">ST</div><div style="position:absolute;top:251.42px;font-size:16px;line-height:1;color:#333;font-weight:400;white-space:nowrap;left:156px;">Active</div><div style="position:absolute;top:251.42px;font-size:16px;line-height:1;color:#333;font-weight:400;white-space:nowrap;letter-spacing:-0.6px;left:248.7px;">WO Close</div><div style="position:absolute;top:251.42px;font-size:16px;line-height:1;color:#333;font-weight:400;white-space:nowrap;left:370.6px;">2008</div><div style="position:absolute;top:251.42px;font-size:16px;line-height:1;color:#333;font-weight:400;white-space:nowrap;left:422.2px;">R</div><div style="position:absolute;top:235.42px;font-size:16px;line-height:1;color:#333;font-weight:400;white-space:nowrap;left:510.6px;">Long Stroke Crank Assembly</div><div style="position:absolute;top:251.42px;font-size:16px;line-height:1;color:#333;font-weight:400;white-space:nowrap;letter-spacing:-1.7px;left:772.5px;">EA</div><div style="position:absolute;top:251.42px;font-size:16px;line-height:1;color:#333;font-weight:400;white-space:nowrap;left:499.5px;width:400px;text-align:right;">5.0000</div><div style="position:absolute;top:251.42px;font-size:16px;line-height:1;color:#333;font-weight:400;white-space:nowrap;left:585.75px;width:400px;text-align:right;">15.0000</div><div style="position:absolute;top:251.42px;font-size:16px;line-height:1;color:#333;font-weight:400;white-space:nowrap;letter-spacing:-0.8px;left:995px;">NASH</div><div style="position:absolute;top:251.42px;font-size:16px;line-height:1;color:#333;font-weight:400;white-space:nowrap;left:729.5px;width:400px;text-align:right;">10</div><div style="position:absolute;top:251.42px;font-size:16px;line-height:1;color:#333;font-weight:400;white-space:nowrap;letter-spacing:-1.2px;left:1143px;">STEERING</div><div style="position:absolute;top:251.42px;font-size:16px;line-height:1;color:#333;font-weight:400;white-space:nowrap;left:937.5999999999999px;width:400px;text-align:right;">0.0000</div><div style="position:absolute;top:251.42px;font-size:16px;line-height:1;color:#333;font-weight:400;white-space:nowrap;left:1026px;width:400px;text-align:right;">0.00</div><div style="position:absolute;top:251.42px;font-size:16px;line-height:1;color:#333;font-weight:400;white-space:nowrap;left:1168.25px;width:400px;text-align:right;">0.0000</div><div style="position:absolute;top:251.42px;font-size:16px;line-height:1;color:#333;font-weight:400;white-space:nowrap;left:1287px;width:400px;text-align:right;">0.0000</div><div style="position:absolute;left:0;top:287.5px;width:1784px;height:57.5px;background:#fff"></div><div style="position:absolute;top:308.92px;font-size:16px;line-height:1;color:#333;font-weight:400;white-space:nowrap;left:-362.6px;width:400px;text-align:right;">60</div><div style="position:absolute;top:308.92px;font-size:16px;line-height:1;color:#333;font-weight:400;white-space:nowrap;letter-spacing:-0.25px;left:51.2px;">Stock</div><div style="position:absolute;top:308.92px;font-size:16px;line-height:1;color:#333;font-weight:400;white-space:nowrap;letter-spacing:-1.6px;left:110.69999999999999px;">ST</div><div style="position:absolute;top:308.92px;font-size:16px;line-height:1;color:#333;font-weight:400;white-space:nowrap;left:156px;">Active</div><div style="position:absolute;top:308.92px;font-size:16px;line-height:1;color:#333;font-weight:400;white-space:nowrap;letter-spacing:-0.6px;left:248.7px;">WO Close</div><div style="position:absolute;top:308.92px;font-size:16px;line-height:1;color:#333;font-weight:400;white-space:nowrap;left:370.6px;">2007</div><div style="position:absolute;top:308.92px;font-size:16px;line-height:1;color:#333;font-weight:400;white-space:nowrap;left:422.2px;">R</div><div style="position:absolute;top:292.92px;font-size:16px;line-height:1;color:#333;font-weight:400;white-space:nowrap;left:510.6px;">Speedo Seat</div><div style="position:absolute;top:308.92px;font-size:16px;line-height:1;color:#333;font-weight:400;white-space:nowrap;letter-spacing:-1.7px;left:772.5px;">EA</div><div style="position:absolute;top:308.92px;font-size:16px;line-height:1;color:#333;font-weight:400;white-space:nowrap;left:499.5px;width:400px;text-align:right;">5.0000</div><div style="position:absolute;top:308.92px;font-size:16px;line-height:1;color:#333;font-weight:400;white-space:nowrap;left:585.75px;width:400px;text-align:right;">28.0000</div><div style="position:absolute;top:308.92px;font-size:16px;line-height:1;color:#333;font-weight:400;white-space:nowrap;letter-spacing:-0.8px;left:995px;">NASH</div><div style="position:absolute;top:308.92px;font-size:16px;line-height:1;color:#333;font-weight:400;white-space:nowrap;left:729.5px;width:400px;text-align:right;">20</div><div style="position:absolute;top:308.92px;font-size:16px;line-height:1;color:#333;font-weight:400;white-space:nowrap;letter-spacing:-1.3px;left:1144.2px;">ASSM</div><div style="position:absolute;top:308.92px;font-size:16px;line-height:1;color:#333;font-weight:400;white-space:nowrap;left:1196.7px;width:20.5px;overflow:hidden;">(ASSEMBLY)</div><div style="position:absolute;top:308.92px;font-size:16px;line-height:1;color:#333;font-weight:400;white-space:nowrap;left:937.5999999999999px;width:400px;text-align:right;">0.0000</div><div style="position:absolute;top:308.92px;font-size:16px;line-height:1;color:#333;font-weight:400;white-space:nowrap;left:1026px;width:400px;text-align:right;">0.00</div><div style="position:absolute;top:308.92px;font-size:16px;line-height:1;color:#333;font-weight:400;white-space:nowrap;left:1168.25px;width:400px;text-align:right;">0.0000</div><div style="position:absolute;top:308.92px;font-size:16px;line-height:1;color:#333;font-weight:400;white-space:nowrap;left:1287px;width:400px;text-align:right;">0.0000</div><div style="position:absolute;left:0;top:345.0px;width:1784px;height:57.5px;background:#ebebeb"></div><div style="position:absolute;top:366.42px;font-size:16px;line-height:1;color:#333;font-weight:400;white-space:nowrap;left:-362.6px;width:400px;text-align:right;">70</div><div style="position:absolute;top:366.42px;font-size:16px;line-height:1;color:#333;font-weight:400;white-space:nowrap;letter-spacing:-0.25px;left:51.2px;">Stock</div><div style="position:absolute;top:366.42px;font-size:16px;line-height:1;color:#333;font-weight:400;white-space:nowrap;letter-spacing:-1.6px;left:110.69999999999999px;">ST</div><div style="position:absolute;top:366.42px;font-size:16px;line-height:1;color:#333;font-weight:400;white-space:nowrap;left:156px;">Active</div><div style="position:absolute;top:366.42px;font-size:16px;line-height:1;color:#333;font-weight:400;white-space:nowrap;letter-spacing:-0.6px;left:248.7px;">WO Close</div><div style="position:absolute;top:366.42px;font-size:16px;line-height:1;color:#333;font-weight:400;white-space:nowrap;left:370.6px;">2010</div><div style="position:absolute;top:366.42px;font-size:16px;line-height:1;color:#333;font-weight:400;white-space:nowrap;left:422.2px;">R</div><div style="position:absolute;top:350.42px;font-size:16px;line-height:1;color:#333;font-weight:400;white-space:nowrap;left:510.6px;">50 Tooth Front Sprocket</div><div style="position:absolute;top:366.42px;font-size:16px;line-height:1;color:#333;font-weight:400;white-space:nowrap;letter-spacing:-1.7px;left:772.5px;">EA</div><div style="position:absolute;top:366.42px;font-size:16px;line-height:1;color:#333;font-weight:400;white-space:nowrap;left:499.5px;width:400px;text-align:right;">5.0000</div><div style="position:absolute;top:366.42px;font-size:16px;line-height:1;color:#333;font-weight:400;white-space:nowrap;left:585.75px;width:400px;text-align:right;">-30.0000</div><div style="position:absolute;top:366.42px;font-size:16px;line-height:1;color:#333;font-weight:400;white-space:nowrap;letter-spacing:-0.8px;left:995px;">NASH</div><div style="position:absolute;top:366.42px;font-size:16px;line-height:1;color:#333;font-weight:400;white-space:nowrap;left:729.5px;width:400px;text-align:right;">20</div><div style="position:absolute;top:366.42px;font-size:16px;line-height:1;color:#333;font-weight:400;white-space:nowrap;letter-spacing:-1.3px;left:1144.2px;">ASSM</div><div style="position:absolute;top:366.42px;font-size:16px;line-height:1;color:#333;font-weight:400;white-space:nowrap;left:1196.7px;width:20.5px;overflow:hidden;">(ASSEMBLY)</div><div style="position:absolute;top:366.42px;font-size:16px;line-height:1;color:#333;font-weight:400;white-space:nowrap;left:937.5999999999999px;width:400px;text-align:right;">0.0000</div><div style="position:absolute;top:366.42px;font-size:16px;line-height:1;color:#333;font-weight:400;white-space:nowrap;left:1026px;width:400px;text-align:right;">0.00</div><div style="position:absolute;top:366.42px;font-size:16px;line-height:1;color:#333;font-weight:400;white-space:nowrap;left:1168.25px;width:400px;text-align:right;">0.0000</div><div style="position:absolute;top:366.42px;font-size:16px;line-height:1;color:#333;font-weight:400;white-space:nowrap;left:1287px;width:400px;text-align:right;">0.0000</div><div style="position:absolute;left:0;top:402.5px;width:1784px;height:57.5px;background:#fff"></div><div style="position:absolute;top:423.92px;font-size:16px;line-height:1;color:#333;font-weight:400;white-space:nowrap;left:-362.6px;width:400px;text-align:right;">80</div><div style="position:absolute;top:423.92px;font-size:16px;line-height:1;color:#333;font-weight:400;white-space:nowrap;letter-spacing:-0.25px;left:51.2px;">Stock</div><div style="position:absolute;top:423.92px;font-size:16px;line-height:1;color:#333;font-weight:400;white-space:nowrap;letter-spacing:-1.6px;left:110.69999999999999px;">ST</div><div style="position:absolute;top:423.92px;font-size:16px;line-height:1;color:#333;font-weight:400;white-space:nowrap;left:156px;">Active</div><div style="position:absolute;top:423.92px;font-size:16px;line-height:1;color:#333;font-weight:400;white-space:nowrap;letter-spacing:-0.6px;left:248.7px;">WO Close</div><div style="position:absolute;top:423.92px;font-size:16px;line-height:1;color:#333;font-weight:400;white-space:nowrap;left:370.6px;">2013</div><div style="position:absolute;top:423.92px;font-size:16px;line-height:1;color:#333;font-weight:400;white-space:nowrap;left:422.2px;">R</div><div style="position:absolute;top:407.92px;font-size:16px;line-height:1;color:#333;font-weight:400;white-space:nowrap;left:510.6px;">28" Chain</div><div style="position:absolute;top:423.92px;font-size:16px;line-height:1;color:#333;font-weight:400;white-space:nowrap;letter-spacing:-1.7px;left:772.5px;">EA</div><div style="position:absolute;top:423.92px;font-size:16px;line-height:1;color:#333;font-weight:400;white-space:nowrap;left:499.5px;width:400px;text-align:right;">5.0000</div><div style="position:absolute;top:423.92px;font-size:16px;line-height:1;color:#333;font-weight:400;white-space:nowrap;left:585.75px;width:400px;text-align:right;">15.0000</div><div style="position:absolute;top:423.92px;font-size:16px;line-height:1;color:#333;font-weight:400;white-space:nowrap;letter-spacing:-0.8px;left:995px;">NASH</div><div style="position:absolute;top:423.92px;font-size:16px;line-height:1;color:#333;font-weight:400;white-space:nowrap;left:729.5px;width:400px;text-align:right;">20</div><div style="position:absolute;top:423.92px;font-size:16px;line-height:1;color:#333;font-weight:400;white-space:nowrap;letter-spacing:-1.3px;left:1144.2px;">ASSM</div><div style="position:absolute;top:423.92px;font-size:16px;line-height:1;color:#333;font-weight:400;white-space:nowrap;left:1196.7px;width:20.5px;overflow:hidden;">(ASSEMBLY)</div><div style="position:absolute;top:423.92px;font-size:16px;line-height:1;color:#333;font-weight:400;white-space:nowrap;left:937.5999999999999px;width:400px;text-align:right;">0.0000</div><div style="position:absolute;top:423.92px;font-size:16px;line-height:1;color:#333;font-weight:400;white-space:nowrap;left:1026px;width:400px;text-align:right;">0.00</div><div style="position:absolute;top:423.92px;font-size:16px;line-height:1;color:#333;font-weight:400;white-space:nowrap;left:1168.25px;width:400px;text-align:right;">0.0000</div><div style="position:absolute;top:423.92px;font-size:16px;line-height:1;color:#333;font-weight:400;white-space:nowrap;left:1287px;width:400px;text-align:right;">0.0000</div><div style="position:absolute;left:0;top:460.0px;width:1784px;height:57.5px;background:#ebebeb"></div><div style="position:absolute;top:481.42px;font-size:16px;line-height:1;color:#333;font-weight:400;white-space:nowrap;left:-362.6px;width:400px;text-align:right;">90</div><div style="position:absolute;top:481.42px;font-size:16px;line-height:1;color:#333;font-weight:400;white-space:nowrap;letter-spacing:-0.25px;left:51.2px;">Stock</div><div style="position:absolute;top:481.42px;font-size:16px;line-height:1;color:#333;font-weight:400;white-space:nowrap;letter-spacing:-1.6px;left:110.69999999999999px;">ST</div><div style="position:absolute;top:481.42px;font-size:16px;line-height:1;color:#333;font-weight:400;white-space:nowrap;left:156px;">Active</div><div style="position:absolute;top:481.42px;font-size:16px;line-height:1;color:#333;font-weight:400;white-space:nowrap;letter-spacing:-0.6px;left:248.7px;">WO Close</div><div style="position:absolute;top:481.42px;font-size:16px;line-height:1;color:#333;font-weight:400;white-space:nowrap;left:370.6px;">2014</div><div style="position:absolute;top:481.42px;font-size:16px;line-height:1;color:#333;font-weight:400;white-space:nowrap;left:422.2px;">R</div><div style="position:absolute;top:465.42px;font-size:16px;line-height:1;color:#333;font-weight:400;white-space:nowrap;left:510.6px;">Sure Grip Pedals</div><div style="position:absolute;top:481.42px;font-size:16px;line-height:1;color:#333;font-weight:400;white-space:nowrap;letter-spacing:-1.7px;left:772.5px;">EA</div><div style="position:absolute;top:481.42px;font-size:16px;line-height:1;color:#333;font-weight:400;white-space:nowrap;left:499.5px;width:400px;text-align:right;">5.0000</div><div style="position:absolute;top:481.42px;font-size:16px;line-height:1;color:#333;font-weight:400;white-space:nowrap;left:585.75px;width:400px;text-align:right;">12.0000</div><div style="position:absolute;top:481.42px;font-size:16px;line-height:1;color:#333;font-weight:400;white-space:nowrap;letter-spacing:-0.8px;left:995px;">NASH</div><div style="position:absolute;top:481.42px;font-size:16px;line-height:1;color:#333;font-weight:400;white-space:nowrap;left:729.5px;width:400px;text-align:right;">20</div><div style="position:absolute;top:481.42px;font-size:16px;line-height:1;color:#333;font-weight:400;white-space:nowrap;letter-spacing:-1.3px;left:1144.2px;">ASSM</div><div style="position:absolute;top:481.42px;font-size:16px;line-height:1;color:#333;font-weight:400;white-space:nowrap;left:1196.7px;width:20.5px;overflow:hidden;">(ASSEMBLY)</div><div style="position:absolute;top:481.42px;font-size:16px;line-height:1;color:#333;font-weight:400;white-space:nowrap;left:937.5999999999999px;width:400px;text-align:right;">0.0000</div><div style="position:absolute;top:481.42px;font-size:16px;line-height:1;color:#333;font-weight:400;white-space:nowrap;left:1026px;width:400px;text-align:right;">0.00</div><div style="position:absolute;top:481.42px;font-size:16px;line-height:1;color:#333;font-weight:400;white-space:nowrap;left:1168.25px;width:400px;text-align:right;">0.0000</div><div style="position:absolute;top:481.42px;font-size:16px;line-height:1;color:#333;font-weight:400;white-space:nowrap;left:1287px;width:400px;text-align:right;">0.0000</div></div><div style="position:absolute;left:1853px;top:326px;width:20px;height:492px;background:#f1f1f1;"></div><div style="position:absolute;left:1855px;top:347.4px;width:17px;height:174px;background:#c1c1c1;"></div><svg style="position:absolute;left:1853px;top:326px" width="20" height="492"><path d="M6 15 L10.5 10.5 L15 15 Z" fill="#a3a3a3"/><path d="M6 477 L15 477 L10.5 482 Z" fill="#505050"/></svg><div style="position:absolute;left:66.5px;top:818px;width:1786px;height:20.5px;background:#f1f1f1;"></div><div style="position:absolute;left:89px;top:820px;width:1278px;height:17px;background:#c1c1c1;"></div><div style="position:absolute;left:1852px;top:818px;width:20px;height:20.5px;background:#dcdcdc;"></div><svg style="position:absolute;left:66px;top:818px" width="1790" height="21"><path d="M16 10.5 L11 6 L11 15 Z" fill="#a3a3a3" transform="translate(27,0) scale(-1,1)"/><path d="M1772 10.5 L1777 5.5 L1777 15.5 Z" fill="#505050" transform="translate(3553,0) scale(-1,1)"/></svg><div style="position:absolute;left:65.5px;top:839px;width:1808px;height:3px;background:#2b8be6;border-radius:0 0 2px 2px;"></div><div style="position:absolute;left:65.2px;top:851px;width:64.3px;height:28px;background:#ececec;border:1px solid #dcdcdc;border-top-color:#c6c6c6;border-bottom:2px solid #b8daf6;box-sizing:border-box;border-radius:3px;box-shadow:inset 0 1px 2px rgba(0,0,0,0.08);"></div><div style="position:absolute;top:856.32px;font-size:16px;line-height:1;color:#333;font-weight:400;white-space:nowrap;left:-276.8px;width:400px;text-align:right;">1</div><div style="position:absolute;top:857.32px;font-size:16px;line-height:1;color:#333;font-weight:400;white-space:nowrap;left:134.2px;">of</div><div style="position:absolute;left:152.4px;top:851px;width:63.0px;height:28px;background:#ececec;border:1px solid #dcdcdc;border-top-color:#c6c6c6;border-bottom:2px solid #b8daf6;box-sizing:border-box;border-radius:3px;box-shadow:inset 0 1px 2px rgba(0,0,0,0.08);"></div><div style="position:absolute;top:856.32px;font-size:16px;line-height:1;color:#333;font-weight:400;white-space:nowrap;left:-189px;width:400px;text-align:right;">22</div><div style="position:absolute;top:857.32px;font-size:16px;line-height:1;color:#333;font-weight:400;white-space:nowrap;left:220.6px;">Actual Cost</div><div style="position:absolute;left:304.7px;top:851px;width:161.60000000000002px;height:28px;background:#ececec;border:1px solid #dcdcdc;border-top-color:#c6c6c6;border-bottom:2px solid #b8daf6;box-sizing:border-box;border-radius:3px;box-shadow:inset 0 1px 2px rgba(0,0,0,0.08);"></div><div style="position:absolute;top:856.32px;font-size:16px;line-height:1;color:#333;font-weight:400;white-space:nowrap;left:62px;width:400px;text-align:right;">0.00</div><div style="position:absolute;left:68px;top:891px;width:1803.5px;height:69.5px;background:#fff;border-radius:4px;box-shadow:0 1px 3px rgba(0,0,0,0.3);"></div><div style="position:absolute;left:76.2px;top:896px;width:98.5px;height:27.7px;background:#1a76d9;border-radius:3px;box-shadow:0 1px 2px rgba(0,0,0,0.25)"></div><div style="position:absolute;top:901.87px;font-size:16px;line-height:1;color:#fff;font-weight:400;white-space:nowrap;-webkit-text-stroke:0.3px #fff;left:-174.55px;width:600px;text-align:center;">Description</div><div style="position:absolute;left:184.4px;top:896px;width:117.6px;height:27.7px;background:#bdbdbd;border-radius:3px;box-shadow:0 1px 2px rgba(0,0,0,0.25)"></div><div style="position:absolute;top:901.87px;font-size:16px;line-height:1;color:#eeeeee;font-weight:400;white-space:nowrap;left:-56.80000000000001px;width:600px;text-align:center;">Phantom BOM</div><div style="position:absolute;left:312.3px;top:896px;width:95.5px;height:27.7px;background:#1a76d9;border-radius:3px;box-shadow:0 1px 2px rgba(0,0,0,0.25)"></div><div style="position:absolute;top:901.87px;font-size:16px;line-height:1;color:#fff;font-weight:400;white-space:nowrap;-webkit-text-stroke:0.3px #fff;left:60.05000000000001px;width:600px;text-align:center;">Availability</div><div style="position:absolute;left:417px;top:896px;width:124.9px;height:27.7px;background:#1a76d9;border-radius:3px;box-shadow:0 1px 2px rgba(0,0,0,0.25)"></div><div style="position:absolute;top:901.87px;font-size:16px;line-height:1;color:#fff;font-weight:400;white-space:nowrap;-webkit-text-stroke:0.3px #fff;left:179.45px;width:600px;text-align:center;">Serial Numbers</div><div style="position:absolute;left:552.2px;top:896px;width:127.8px;height:27.7px;background:#1a76d9;border-radius:3px;box-shadow:0 1px 2px rgba(0,0,0,0.25)"></div><div style="position:absolute;top:901.87px;font-size:16px;line-height:1;color:#fff;font-weight:400;white-space:nowrap;-webkit-text-stroke:0.3px #fff;left:316.1px;width:600px;text-align:center;">Transactions</div><div style="position:absolute;left:690.1px;top:896px;width:94.9px;height:27.7px;background:#1a76d9;border-radius:3px;box-shadow:0 1px 2px rgba(0,0,0,0.25)"></div><div style="position:absolute;top:901.87px;font-size:16px;line-height:1;color:#fff;font-weight:400;white-space:nowrap;-webkit-text-stroke:0.3px #fff;left:437.54999999999995px;width:600px;text-align:center;">Lots</div><div style="position:absolute;left:795.1px;top:896px;width:94.9px;height:27.7px;background:#1a76d9;border-radius:3px;box-shadow:0 1px 2px rgba(0,0,0,0.25)"></div><div style="position:absolute;top:901.87px;font-size:16px;line-height:1;color:#fff;font-weight:400;white-space:nowrap;-webkit-text-stroke:0.3px #fff;left:542.55px;width:600px;text-align:center;">Image</div><div style="position:absolute;left:900.1px;top:896px;width:94.9px;height:27.7px;background:#bdbdbd;border-radius:3px;box-shadow:0 1px 2px rgba(0,0,0,0.25)"></div><div style="position:absolute;top:901.87px;font-size:16px;line-height:1;color:#eeeeee;font-weight:400;white-space:nowrap;left:647.55px;width:600px;text-align:center;">Create POs</div><div style="position:absolute;left:1005px;top:896px;width:103.6px;height:27.7px;background:#bdbdbd;border-radius:3px;box-shadow:0 1px 2px rgba(0,0,0,0.25)"></div><div style="position:absolute;top:901.87px;font-size:16px;line-height:1;color:#eeeeee;font-weight:400;white-space:nowrap;left:756.8px;width:600px;text-align:center;">Create WOs</div><div style="position:absolute;left:1118.7px;top:896px;width:94.9px;height:27.7px;background:#1a76d9;border-radius:3px;box-shadow:0 1px 2px rgba(0,0,0,0.25)"></div><div style="position:absolute;top:901.87px;font-size:16px;line-height:1;color:#fff;font-weight:400;white-space:nowrap;-webkit-text-stroke:0.3px #fff;left:866.1500000000001px;width:600px;text-align:center;">Create PTs</div><div style="position:absolute;left:1223px;top:896px;width:120.0px;height:27.7px;background:#bdbdbd;border-radius:3px;box-shadow:0 1px 2px rgba(0,0,0,0.25)"></div><div style="position:absolute;top:901.87px;font-size:16px;line-height:1;color:#eeeeee;font-weight:400;white-space:nowrap;left:983.0px;width:600px;text-align:center;">Length x Width</div><div style="position:absolute;left:76.2px;top:927.3px;width:98.5px;height:27.5px;background:#bdbdbd;border-radius:3px;box-shadow:0 1px 2px rgba(0,0,0,0.25)"></div><div style="position:absolute;top:933.67px;font-size:16px;line-height:1;color:#eeeeee;font-weight:400;white-space:nowrap;left:-174.55px;width:600px;text-align:center;">Add to BOM</div><div style="position:absolute;left:184.4px;top:927.3px;width:117.6px;height:27.5px;background:#bdbdbd;border-radius:3px;box-shadow:0 1px 2px rgba(0,0,0,0.25)"></div><div style="position:absolute;top:933.67px;font-size:16px;line-height:1;color:#eeeeee;font-weight:400;white-space:nowrap;left:-56.80000000000001px;width:600px;text-align:center;">Clear BOM</div><div style="position:absolute;left:312.3px;top:927.3px;width:95.5px;height:27.5px;background:#1a76d9;border-radius:3px;box-shadow:0 1px 2px rgba(0,0,0,0.25)"></div><div style="position:absolute;top:933.67px;font-size:16px;line-height:1;color:#fff;font-weight:400;white-space:nowrap;-webkit-text-stroke:0.3px #fff;left:60.05000000000001px;width:600px;text-align:center;">Work Order</div><div style="position:absolute;left:417px;top:927.3px;width:124.9px;height:27.5px;background:#1a76d9;border-radius:3px;box-shadow:0 1px 2px rgba(0,0,0,0.25)"></div><div style="position:absolute;top:933.67px;font-size:16px;line-height:1;color:#fff;font-weight:400;white-space:nowrap;-webkit-text-stroke:0.3px #fff;left:179.45px;width:600px;text-align:center;">Purchase Order</div><div style="position:absolute;left:552.2px;top:927.3px;width:127.8px;height:27.5px;background:#1a76d9;border-radius:3px;box-shadow:0 1px 2px rgba(0,0,0,0.25)"></div><div style="position:absolute;top:933.67px;font-size:16px;line-height:1;color:#fff;font-weight:400;white-space:nowrap;-webkit-text-stroke:0.3px #fff;left:316.1px;width:600px;text-align:center;">Dimension Yield</div><div style="position:absolute;left:690.1px;top:927.3px;width:94.9px;height:27.5px;background:#bdbdbd;border-radius:3px;box-shadow:0 1px 2px rgba(0,0,0,0.25)"></div><div style="position:absolute;top:933.67px;font-size:16px;line-height:1;color:#eeeeee;font-weight:400;white-space:nowrap;left:437.54999999999995px;width:600px;text-align:center;">Image</div><div style="position:absolute;left:795.1px;top:927.3px;width:94.9px;height:27.5px;background:#1a76d9;border-radius:3px;box-shadow:0 1px 2px rgba(0,0,0,0.25)"></div><div style="position:absolute;top:933.67px;font-size:16px;line-height:1;color:#fff;font-weight:400;white-space:nowrap;-webkit-text-stroke:0.3px #fff;left:542.55px;width:600px;text-align:center;">Bin/Cost</div><div style="position:absolute;left:900.1px;top:927.3px;width:94.9px;height:27.5px;background:#1a76d9;border-radius:3px;box-shadow:0 1px 2px rgba(0,0,0,0.25)"></div><div style="position:absolute;top:933.67px;font-size:16px;line-height:1;color:#fff;font-weight:400;white-space:nowrap;-webkit-text-stroke:0.3px #fff;left:647.55px;width:600px;text-align:center;">Budget</div><div style="position:absolute;left:1005px;top:927.3px;width:103.6px;height:27.5px;background:#1a76d9;border-radius:3px;box-shadow:0 1px 2px rgba(0,0,0,0.25)"></div><div style="position:absolute;top:933.67px;font-size:16px;line-height:1;color:#fff;font-weight:400;white-space:nowrap;-webkit-text-stroke:0.3px #fff;left:756.8px;width:600px;text-align:center;">Where Used</div><div style="position:absolute;left:52px;top:992px;width:1837.4px;height:37.4px;background:#fff;border-radius:3px;box-shadow:0 1px 3px rgba(0,0,0,0.3);"></div><div style="position:absolute;left:58.9px;top:996.2px;width:95.2px;height:28.0px;background:#bdbdbd;border-radius:3px;box-shadow:0 1px 2px rgba(0,0,0,0.25)"></div><div style="position:absolute;top:1002.22px;font-size:16px;line-height:1;color:#eeeeee;font-weight:400;white-space:nowrap;left:-193.5px;width:600px;text-align:center;">OK</div><div style="position:absolute;left:164.4px;top:996.2px;width:94.6px;height:28.0px;background:#1a76d9;border-radius:3px;box-shadow:0 1px 2px rgba(0,0,0,0.25)"></div><div style="position:absolute;top:1002.22px;font-size:16px;line-height:1;color:#fff;font-weight:400;white-space:nowrap;-webkit-text-stroke:0.3px #fff;left:-88.30000000000001px;width:600px;text-align:center;">Cancel</div>
</body></html>
